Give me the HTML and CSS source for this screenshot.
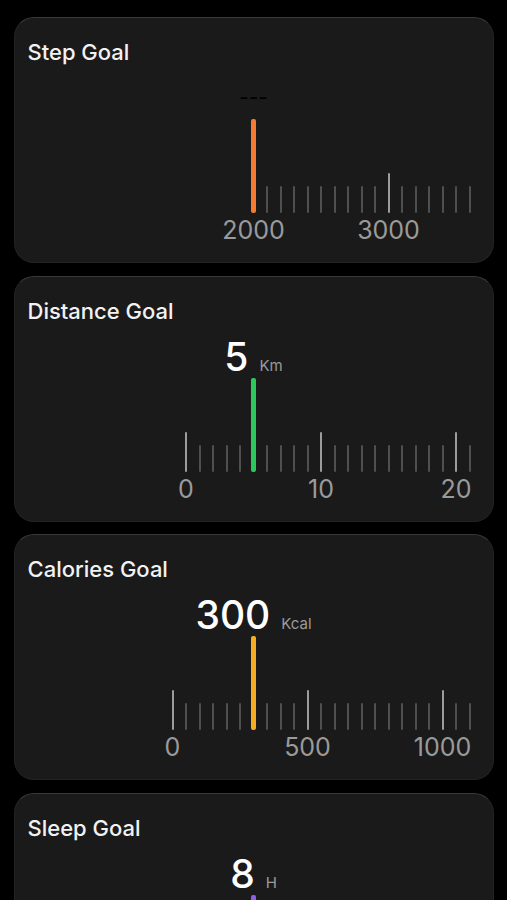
FILE: index.html
```html
<!DOCTYPE html>
<html lang="en">
<head>
    <meta charset="UTF-8">
    <meta name="viewport" content="width=device-width, initial-scale=1.0">
    <title>Goals</title>
    <link rel="stylesheet" href="styles.css">
</head>
<body>
    <div class="page">
        <section class="card">
            <h2 class="card-title">Step Goal</h2>
            <div class="reading"><span class="value empty">---</span></div>
            <div class="ruler" data-min="2000" data-step="100" data-count="17" data-value="2000" data-color="orange"></div>
        </section>

        <section class="card">
            <h2 class="card-title">Distance Goal</h2>
            <div class="reading"><span class="value">5</span><span class="unit">Km</span></div>
            <div class="ruler" data-min="0" data-step="1" data-count="22" data-value="5" data-color="green"></div>
        </section>

        <section class="card">
            <h2 class="card-title">Calories Goal</h2>
            <div class="reading"><span class="value">300</span><span class="unit">Kcal</span></div>
            <div class="ruler" data-min="0" data-step="50" data-count="23" data-value="300" data-color="amber"></div>
        </section>

        <section class="card">
            <h2 class="card-title">Sleep Goal</h2>
            <div class="reading"><span class="value">8</span><span class="unit">H</span></div>
            <div class="ruler" data-min="0" data-step="1" data-count="25" data-value="8" data-color="purple"></div>
        </section>
    </div>

    <script src="script.js"></script>
</body>
</html>
```

FILE: styles.css
```css
body { margin: 0; background-color: #000; font-family: Inter, "Noto Sans", sans-serif; color: #f2f2f2; }
.page { width: 480px; margin: 0 auto; padding-top: 17px; display: flex; flex-direction: column; gap: 12.7px; }
.card { height: 246px; box-sizing: border-box; background-color: #1a1a1b; border: 1px solid #232324; border-top-color: #3a3a3b; border-radius: 20px; padding-top: 20px; overflow: hidden; }
.card-title { margin: 0; padding-left: 13px; font-size: 22px; line-height: 28px; font-weight: 500; }

.reading { margin-top: 11px; height: 42px; display: flex; justify-content: center; align-items: baseline; gap: 11px; }
.value { font-size: 39px; line-height: 42px; font-weight: 500; color: #fff; }
.value.empty { font-size: 21px; font-weight: 400; color: #000; }
.unit { font-size: 15px; line-height: 20px; color: #9a9a9a; }

.ruler { display: flex; }
.tick { flex: none; width: 13.5px; display: flex; flex-direction: column; align-items: center; }
.bar-area { height: 94px; display: flex; align-items: flex-end; }
.bar { width: 2px; height: 27px; border-radius: 1px; background-color: #4f4f50; }
.bar.major { height: 40px; background-color: #9c9c9c; }
.bar.current { width: 5px; height: 94px; border-radius: 2px; }
.bar.orange { background-color: #f47b30; }
.bar.green { background-color: #2bc95c; }
.bar.amber { background-color: #f5ae20; }
.bar.purple { background-color: #8c5cf4; }
.label { height: 30px; margin-top: 2px; font-size: 25px; line-height: 30px; color: #9a9a9a; white-space: nowrap; }
```

FILE: script.js
```js
const SLOT = 13.5;

document.querySelectorAll('.ruler').forEach(ruler => {
    const min = Number(ruler.dataset.min);
    const step = Number(ruler.dataset.step);
    const count = Number(ruler.dataset.count);
    const current = Math.round((Number(ruler.dataset.value) - min) / step);

    // keep the selected tick under the middle of the card
    const center = ruler.parentElement.clientWidth / 2;
    ruler.style.marginLeft = (center - SLOT / 2 - current * SLOT) + 'px';

    for (let i = 0; i < count; i++) {
        const tick = document.createElement('div');
        tick.className = 'tick';

        const area = document.createElement('div');
        area.className = 'bar-area';
        const bar = document.createElement('div');
        bar.className = 'bar';
        if (i % 10 === 0) bar.classList.add('major');
        if (i === current) bar.classList.add('current', ruler.dataset.color);
        area.appendChild(bar);
        tick.appendChild(area);

        const label = document.createElement('div');
        label.className = 'label';
        if (i % 10 === 0) label.textContent = min + i * step;
        tick.appendChild(label);

        ruler.appendChild(tick);
    }
});
```
